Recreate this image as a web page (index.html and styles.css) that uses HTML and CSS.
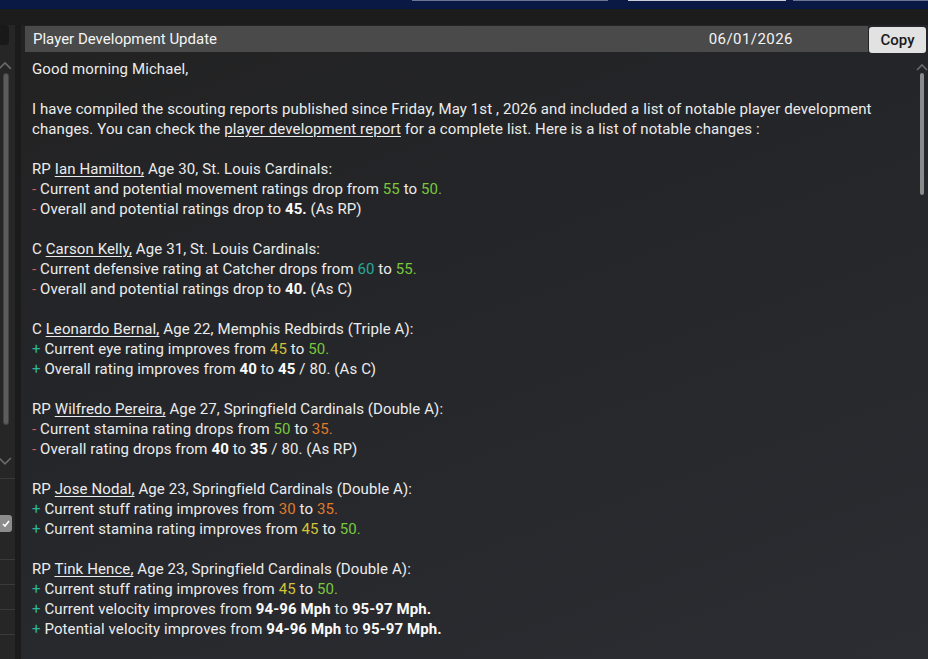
FILE: index.html
```html
<!DOCTYPE html>
<html>
<head>
<meta charset="utf-8">
<link rel="stylesheet" href="styles.css">
</head>
<body>
<div class="topbar">
  <div class="tab tab-a"></div>
  <div class="tab tab-b"></div>
  <div class="tab tab-c"></div>
</div>
<div class="strip"></div>
<div class="frame">
  <aside class="side">
    <div class="side-box"></div>
    <svg class="chev" width="14" height="10" viewBox="0 0 14 10"><path d="M1 8 L7 2 L13 8" fill="none" stroke="#6a6a6a" stroke-width="1.6"/></svg>
    <div class="side-track"></div>
    <svg class="chev chev-down" width="14" height="10" viewBox="0 0 14 10"><path d="M1 2 L7 8 L13 2" fill="none" stroke="#6a6a6a" stroke-width="1.6"/></svg>
    <div class="side-rows">
      <div class="side-row first"><div class="side-check"><svg width="10" height="8" viewBox="0 0 10 8"><path d="M2 4 L4 6 L8 1" fill="none" stroke="#fff" stroke-width="1.6"/></svg></div></div>
      <div class="side-row"></div>
      <div class="side-row"></div>
      <div class="side-row"></div>
      <div class="side-row"></div>
    </div>
  </aside>
  <div class="divider"></div>
  <main class="panel">
    <div class="head">
      <div class="title-bar">
        <span class="title">Player Development Update</span>
        <span class="date">06/01/2026</span>
      </div>
      <button class="copy">Copy</button>
    </div>
    <div class="body">
      <div class="content">
        <p>Good morning Michael,</p>
        <p>I have compiled the scouting reports published since Friday, May 1st , 2026 and included a list of notable player development changes. You can check the <u>player development report</u> for a complete list. Here is a list of notable changes :</p>
        <p>RP <u>Ian Hamilton,</u> Age 30, St. Louis Cardinals:<br>
        <span class="minus">-</span> Current and potential movement ratings drop from <span class="g">55</span> to <span class="g">50.</span><br>
        <span class="minus">-</span> Overall and potential ratings drop to <b>45.</b> (As RP)</p>
        <p>C <u>Carson Kelly,</u> Age 31, St. Louis Cardinals:<br>
        <span class="minus">-</span> Current defensive rating at Catcher drops from <span class="t">60</span> to <span class="g">55.</span><br>
        <span class="minus">-</span> Overall and potential ratings drop to <b>40.</b> (As C)</p>
        <p>C <u>Leonardo Bernal,</u> Age 22, Memphis Redbirds (Triple A):<br>
        <span class="plus">+</span> Current eye rating improves from <span class="y">45</span> to <span class="g">50.</span><br>
        <span class="plus">+</span> Overall rating improves from <b>40</b> to <b>45</b> / 80. (As C)</p>
        <p>RP <u>Wilfredo Pereira,</u> Age 27, Springfield Cardinals (Double A):<br>
        <span class="minus">-</span> Current stamina rating drops from <span class="g">50</span> to <span class="o">35.</span><br>
        <span class="minus">-</span> Overall rating drops from <b>40</b> to <b>35</b> / 80. (As RP)</p>
        <p>RP <u>Jose Nodal,</u> Age 23, Springfield Cardinals (Double A):<br>
        <span class="plus">+</span> Current stuff rating improves from <span class="o">30</span> to <span class="o">35.</span><br>
        <span class="plus">+</span> Current stamina rating improves from <span class="y">45</span> to <span class="g">50.</span></p>
        <p>RP <u>Tink Hence,</u> Age 23, Springfield Cardinals (Double A):<br>
        <span class="plus">+</span> Current stuff rating improves from <span class="y">45</span> to <span class="g">50.</span><br>
        <span class="plus">+</span> Current velocity improves from <b>94-96 Mph</b> to <b>95-97 Mph.</b><br>
        <span class="plus">+</span> Potential velocity improves from <b>94-96 Mph</b> to <b>95-97 Mph.</b></p>
      </div>
      <div class="scroll">
        <svg class="chev-r" width="12" height="8" viewBox="0 0 12 8"><path d="M1 7 L6 2 L11 7" fill="none" stroke="#6a6a6a" stroke-width="1.6"/></svg>
        <div class="thumb"></div>
      </div>
    </div>
  </main>
</div>
</body>
</html>
```
FILE: styles.css
```css
html, body {
  margin: 0;
  padding: 0;
}
body {
  width: 928px;
  height: 659px;
  overflow: hidden;
  background: #1c1c1c;
  font-family: Roboto, "Liberation Sans", sans-serif;
  color: #ececec;
}
.topbar {
  height: 9px;
  background: #0a1944;
  position: relative;
}
.tab {
  position: absolute;
  top: 0;
  height: 1px;
  background: #6b7592;
}
.tab-a { left: 412px; width: 196px; }
.tab-b { left: 628px; width: 158px; background: #c9ccd6; }
.tab-c { left: 793px; width: 135px; }
.strip {
  height: 16px;
  background: #1c1c1c;
}
.frame {
  display: flex;
  height: 634px;
}
.side {
  width: 15px;
  background: #262626;
  display: flex;
  flex-direction: column;
}
.side-box {
  width: 9px;
  height: 20px;
  background: #191919;
  border-radius: 0 4px 4px 0;
}
.chev {
  margin: 16px 0 0 -2px;
}
.side-track {
  width: 4px;
  margin: 2px 0 0 3px;
  height: 356px;
  background: #5c5c5c;
  border: 1px solid #444;
  border-radius: 3px;
}
.chev-down {
  margin-top: 31px;
}
.side-rows {
  margin-top: 12px;
  display: flex;
  flex-direction: column;
}
.side-row {
  height: 24px;
  border-top: 1px solid #3a3a3a;
}
.side-row.first {
  height: 80px;
}
.side-check {
  width: 12px;
  height: 17px;
  margin-top: 36px;
  background: #8c8c8c;
  border-radius: 0 3px 3px 0;
  display: flex;
  align-items: center;
  justify-content: center;
}
.divider {
  width: 6px;
  background: #1b1b1b;
}
.panel {
  flex: 1;
  background: linear-gradient(160deg, #222222 0%, #25262a 45%, #2b2d32 100%);
  display: flex;
  flex-direction: column;
}
.head {
  display: flex;
  align-items: flex-start;
  padding: 1px 2px 0 4px;
  height: 27px;
}
.title-bar {
  flex: 1;
  height: 26px;
  background: #4a4a4a;
  display: flex;
  align-items: center;
  justify-content: space-between;
  padding: 0 75px 0 8px;
  font-size: 15px;
  color: #f4f4f4;
}
.date {
  letter-spacing: 0.45px;
}
.copy {
  width: 57px;
  height: 26px;
  margin: 1px 0 0 1px;
  border: none;
  border-radius: 3px;
  background: #e2e2e2;
  color: #1a1a1a;
  font-family: Roboto, "Liberation Sans", sans-serif;
  font-size: 15px;
  font-weight: 500;
  padding: 0;
}
.body {
  flex: 1;
  display: flex;
  min-height: 0;
}
.content {
  flex: 1;
  padding: 6px 0 0 11px;
  font-size: 15px;
  letter-spacing: 0.1px;
  line-height: 20px;
}
.content p {
  margin: 0 0 20px 0;
}
.content u {
  text-underline-offset: 2px;
}
.content b {
  font-weight: 700;
  color: #fafafa;
}
.minus { color: #d65a5a; }
.plus { color: #2db598; }
.g { color: #78c83c; }
.t { color: #27a99a; }
.y { color: #d3c23a; }
.o { color: #e07b2a; }
.scroll {
  width: 13px;
  display: flex;
  flex-direction: column;
  align-items: center;
  padding-top: 10px;
}
.thumb {
  width: 4px;
  height: 122px;
  margin-top: 2px;
  background: #8a8a8a;
  border-radius: 2px;
}
```
